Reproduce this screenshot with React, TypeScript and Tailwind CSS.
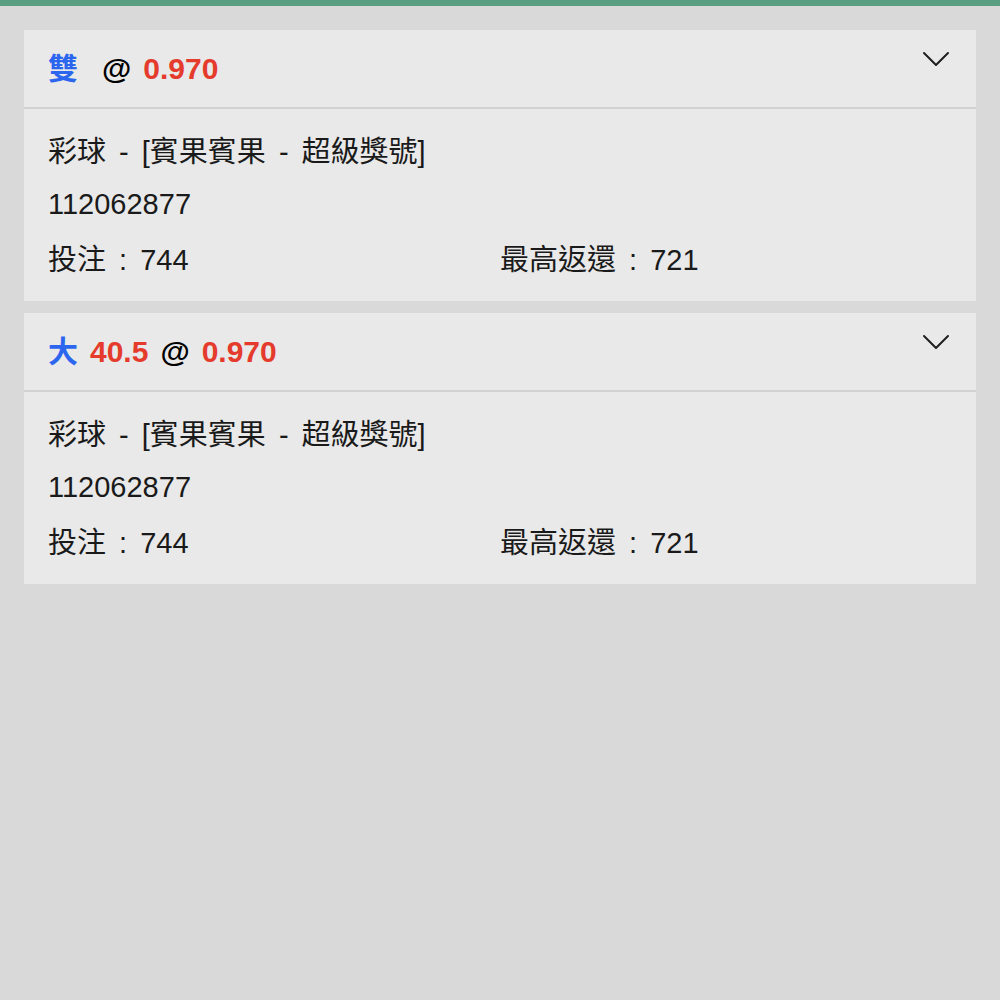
type Bet = {
  pick: string;
  line: string;
  odds: string;
  game: string;
  issue: string;
  stake: number;
  payout: number;
};

const bets: Bet[] = [
  { pick: '雙', line: '', odds: '0.970', game: '彩球 - [賓果賓果 - 超級獎號]', issue: '112062877', stake: 744, payout: 721 },
  { pick: '大', line: '40.5', odds: '0.970', game: '彩球 - [賓果賓果 - 超級獎號]', issue: '112062877', stake: 744, payout: 721 },
];

const font = { fontFamily: '"Liberation Sans", "Noto Sans CJK TC", sans-serif' };

const Chevron = () => (
  <svg width="28" height="16" viewBox="0 0 28 16" fill="none" className="mt-[21px]">
    <polyline points="2,2 14,14 26,2" stroke="#1f1f1f" strokeWidth="2" strokeLinecap="round" strokeLinejoin="round" />
  </svg>
);

const BetCard = ({ bet }: { bet: Bet }) => {
  return (
    <div className="bg-[#e9e9e9]">
      {/* Header */}
      <div className="h-[79px] flex items-start justify-between pl-6 pr-[26px] border-b-2 border-[#d2d2d2]">
        <div className="self-center flex items-center text-[30px] font-bold leading-none">
          <span className="text-[#2c66ee]">{bet.pick}</span>
          <span className={bet.line ? 'ml-3 text-[#e53b2c]' : 'ml-3'}>{bet.line}</span>
          <span className="ml-3 text-black">@</span>
          <span className="ml-3 text-[#e53b2c]">{bet.odds}</span>
        </div>
        <Chevron />
      </div>

      {/* Body */}
      <div className="px-6 pt-[17px] pb-[15px] text-[29px] text-[#1a1a1a] [word-spacing:5px]">
        <div className="leading-[52px]">{bet.game}</div>
        <div className="leading-[52px]">{bet.issue}</div>
        <div className="grid grid-cols-2 leading-[52px] mt-1">
          <div>投注 : {bet.stake}</div>
          <div>最高返還 : {bet.payout}</div>
        </div>
      </div>
    </div>
  );
};

const App = () => {
  return (
    <div className="min-h-screen bg-[#d9d9d9]" style={font}>
      <div className="h-[6px] bg-[#5b9f82]" />
      <div className="px-6 pt-6 flex flex-col gap-3">
        {bets.map((b, i) => (
          <BetCard key={i} bet={b} />
        ))}
      </div>
    </div>
  );
};

export default App;
